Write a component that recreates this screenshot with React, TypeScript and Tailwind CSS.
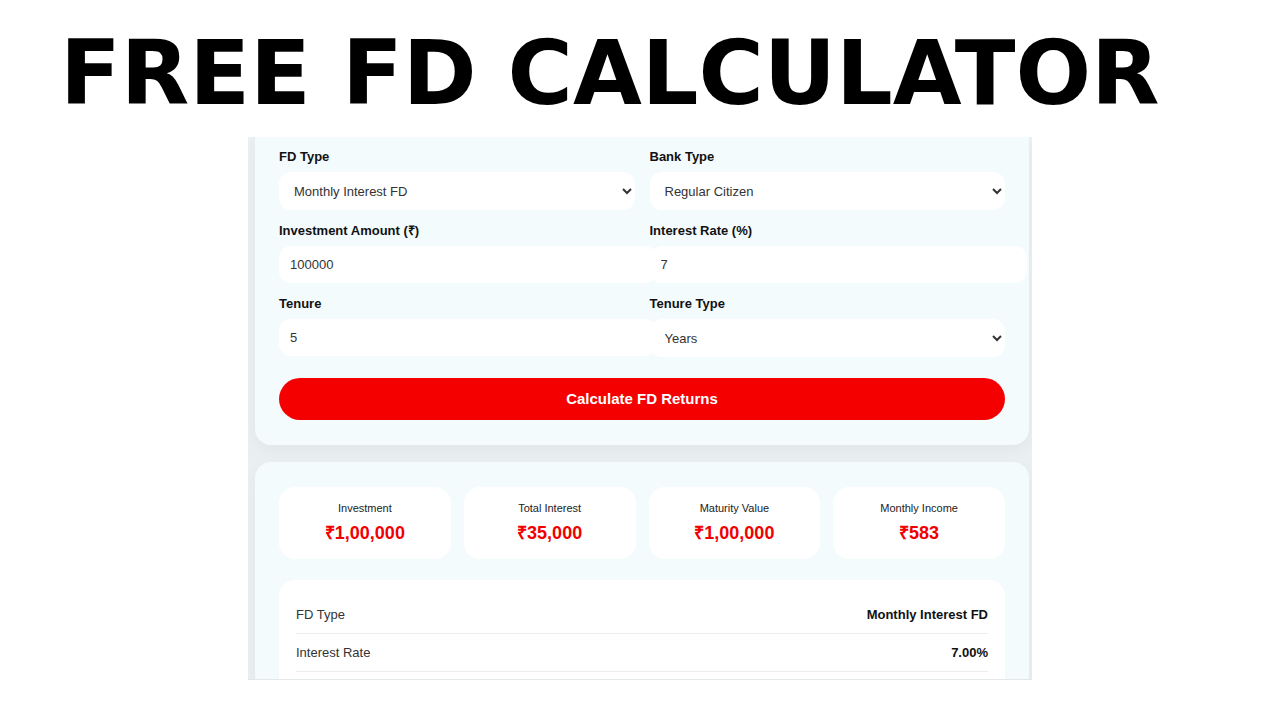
const stats = [
  { label: 'Investment', value: '₹1,00,000' },
  { label: 'Total Interest', value: '₹35,000' },
  { label: 'Maturity Value', value: '₹1,00,000' },
  { label: 'Monthly Income', value: '₹583' },
];

const details = [
  { label: 'FD Type', value: 'Monthly Interest FD' },
  { label: 'Interest Rate', value: '7.00%' },
];

function Label({ children }: { children: React.ReactNode }) {
  return <label className="block text-[13px] leading-[16px] font-bold text-[#111] mb-[7px]">{children}</label>;
}

const selectCls =
  'block w-full h-[38px] rounded-xl bg-white border-0 px-[11px] text-[13px] text-[#333] outline-none';
const inputCls =
  'relative block w-full box-content h-[37px] rounded-xl bg-white border-0 px-[11px] py-0 text-[13px] text-[#333] outline-none';

export default function App() {
  return (
    <div className="min-h-screen bg-white" style={{ fontFamily: '"Liberation Sans", Arial, sans-serif' }}>
      <h1
        className="pt-[28px] pl-[60px] text-[89px] leading-[90px] font-bold text-black whitespace-nowrap"
        style={{ fontFamily: '"DejaVu Sans", sans-serif' }}
      >
        FREE FD CALCULATOR
      </h1>

      <div className="mt-[19px] mx-auto w-[784px] h-[543px] overflow-hidden bg-[#eaf0f2] pl-[7px] pr-[3px] border-b border-[#e2e8ea]">
        {/* form card */}
        <div className="rounded-b-2xl bg-[#f4fbfd] px-[24px] pt-[12px] pb-[25px] shadow-[0_6px_16px_rgba(0,0,0,0.04)]">
          <div className="grid grid-cols-2 gap-x-[15px] gap-y-[13px]">
            <div>
              <Label>FD Type</Label>
              <select className={selectCls} defaultValue="monthly">
                <option value="monthly">Monthly Interest FD</option>
                <option value="cumulative">Cumulative FD</option>
              </select>
            </div>
            <div>
              <Label>Bank Type</Label>
              <select className={selectCls} defaultValue="regular">
                <option value="regular">Regular Citizen</option>
                <option value="senior">Senior Citizen</option>
              </select>
            </div>
            <div>
              <Label>Investment Amount (₹)</Label>
              <input className={inputCls} defaultValue="100000" />
            </div>
            <div>
              <Label>Interest Rate (%)</Label>
              <input className={inputCls} defaultValue="7" />
            </div>
            <div>
              <Label>Tenure</Label>
              <input className={inputCls} defaultValue="5" />
            </div>
            <div>
              <Label>Tenure Type</Label>
              <select className={selectCls + ' relative'} defaultValue="years">
                <option value="years">Years</option>
                <option value="months">Months</option>
              </select>
            </div>
          </div>
          <button className="mt-[21px] w-full h-[42px] rounded-full bg-[#f50000] text-white text-[15px] leading-[40px] font-bold">
            Calculate FD Returns
          </button>
        </div>

        {/* results card */}
        <div className="mt-[17px] rounded-2xl bg-[#f4fbfd] px-[24px] pt-[25px] pb-[25px] shadow-[0_6px_16px_rgba(0,0,0,0.04)]">
          <div className="grid grid-cols-4 gap-[13px]">
            {stats.map((s) => (
              <div key={s.label} className="h-[72px] rounded-2xl bg-white flex flex-col items-center pt-[15px]">
                <div className="text-[11px] leading-[13px] text-[#222]">{s.label}</div>
                <div className="mt-[8px] text-[18px] leading-[21px] font-bold text-[#f00000]">{s.value}</div>
              </div>
            ))}
          </div>
          <div className="mt-[21px] rounded-2xl bg-white px-[17px] pt-[16px] pb-[40px]">
            {details.map((d) => (
              <div key={d.label} className="flex justify-between items-center h-[38px] border-b border-[#ececec] text-[13px]">
                <span className="text-[#333]">{d.label}</span>
                <span className="font-bold text-[#111]">{d.value}</span>
              </div>
            ))}
          </div>
        </div>
      </div>
    </div>
  );
}
